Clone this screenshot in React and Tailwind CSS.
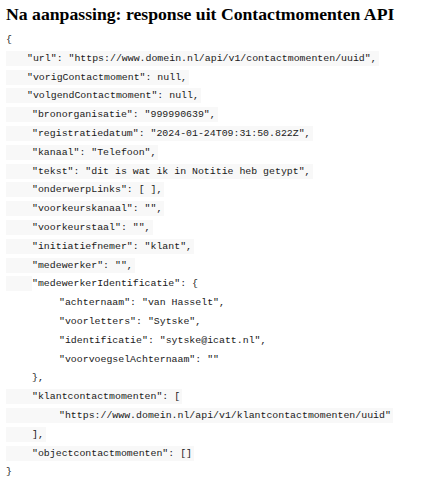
import React from "react";

const lines = [
  { indent: 0, text: "{", hl: "none" },
  { indent: 21, text: '"url": "https://www.domein.nl/api/v1/contactmomenten/uuid",', hl: "full" },
  { indent: 21, text: '"vorigContactmoment": null,', hl: "full" },
  { indent: 21, text: '"volgendContactmoment": null,', hl: "full" },
  { indent: 26, text: '"bronorganisatie": "999990639",', hl: "full" },
  { indent: 26, text: '"registratiedatum": "2024-01-24T09:31:50.822Z",', hl: "full" },
  { indent: 26, text: '"kanaal": "Telefoon",', hl: "full" },
  { indent: 26, text: '"tekst": "dit is wat ik in Notitie heb getypt",', hl: "full" },
  { indent: 26, text: '"onderwerpLinks": [ ],', hl: "full" },
  { indent: 26, text: '"voorkeurskanaal": "",', hl: "full" },
  { indent: 26, text: '"voorkeurstaal": "",', hl: "full" },
  { indent: 26, text: '"initiatiefnemer": "klant",', hl: "full" },
  { indent: 26, text: '"medewerker": "",', hl: "full" },
  { indent: 26, text: '"medewerkerIdentificatie": {', hl: "indent" },
  { indent: 53, text: '"achternaam": "van Hasselt",', hl: "none" },
  { indent: 53, text: '"voorletters": "Sytske",', hl: "none" },
  { indent: 53, text: '"identificatie": "sytske@icatt.nl",', hl: "none" },
  { indent: 53, text: '"voorvoegselAchternaam": ""', hl: "none" },
  { indent: 26, text: "},", hl: "none" },
  { indent: 26, text: '"klantcontactmomenten": [', hl: "full" },
  { indent: 53, text: '"https://www.domein.nl/api/v1/klantcontactmomenten/uuid"', hl: "full" },
  { indent: 26, text: "],", hl: "full" },
  { indent: 26, text: '"objectcontactmomenten": []', hl: "full" },
  { indent: 0, text: "}", hl: "none" },
];

function CodeLine({ indent, text, hl }) {
  return (
    <div className="flex h-[15px] mb-[3.8px] items-center">
      <span
        className={`h-full ${hl === "none" ? "" : "bg-[#f8f8f8]"}`}
        style={{ width: indent }}
      />
      <span className={`h-full pr-[2px] whitespace-pre ${hl === "full" ? "bg-[#f8f8f8]" : ""}`}>
        {text}
      </span>
    </div>
  );
}

export default function App() {
  return (
    <div className="min-h-screen bg-white px-[6px] pt-[3px] text-[#1a1a1a]">
      <h1 className="font-[family-name:'Liberation_Serif',serif] font-bold text-[17.7px] leading-[22px] text-black">
        Na aanpassing: response uit Contactmomenten API
      </h1>
      <div className="mt-[7px] font-[family-name:'Liberation_Mono',monospace] text-[9.9px] leading-[15px]">
        {lines.map((l, i) => (
          <CodeLine key={i} {...l} />
        ))}
      </div>
    </div>
  );
}
